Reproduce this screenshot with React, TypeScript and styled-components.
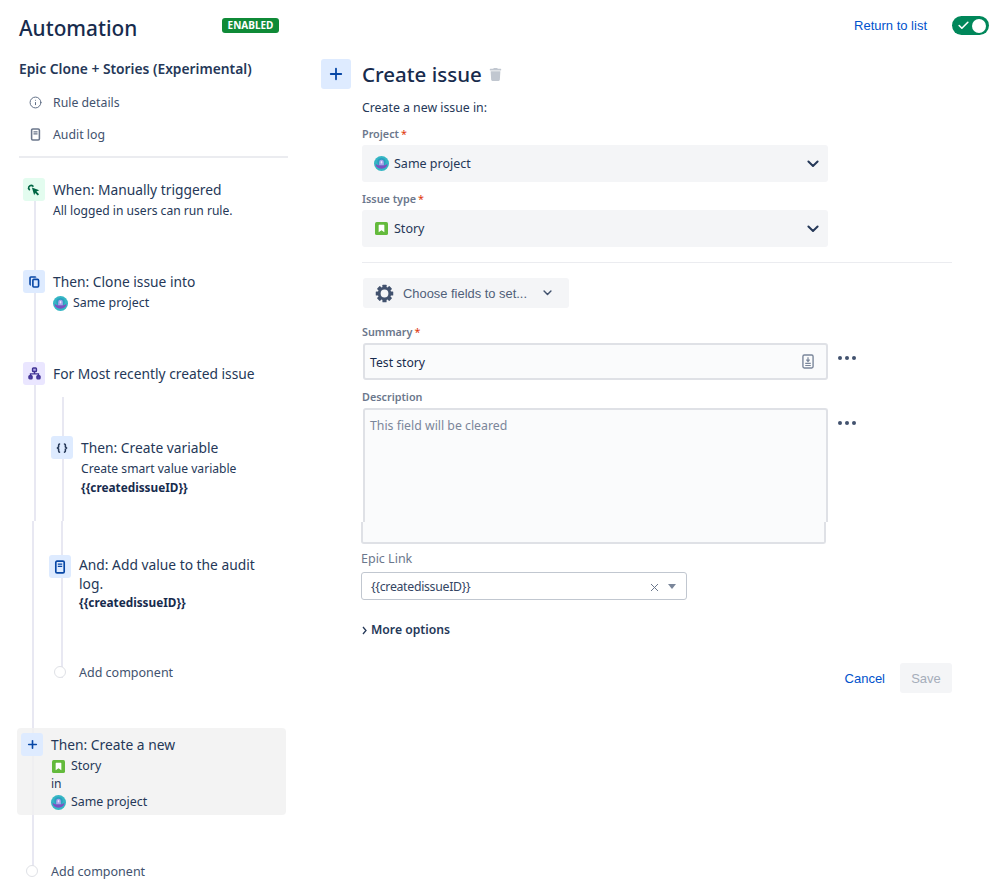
import React from "react"
import styled, { createGlobalStyle } from "styled-components"
import { Check, Info, Plus } from "lucide-react"
import { FaTrash } from "react-icons/fa"

// Components //

const Chevron = ({ size = 12, color = "#253858" }: { size?: number; color?: string }) => (
	<svg width={size} height={size * 0.65} viewBox="0 0 12 8" fill="none">
		<path d="M1.300 1.500L6 6.200l4.700-4.700" stroke={color} strokeWidth="2" strokeLinecap="round" strokeLinejoin="round" />
	</svg>
)

const ProjectAvatar = ({ size = 15 }: { size?: number }) => (
	<svg width={size} height={size} viewBox="0 0 16 16">
		<circle cx="8" cy="8" r="8" fill="#35b6c4" />
		<circle cx="8" cy="6.500" r="4.500" fill="#2b9fc0" />
		<path d="M1.800 8.200c1.400 1.200 2.800 1.700 3.600 1.700h5.200c.8 0 2.200-.5 3.600-1.700.3 2.800-2.600 5.300-6.200 5.300S1.500 11 1.800 8.200z" fill="#7e4fc0" />
		<path d="M5.500 9.900V6.500a2.500 2.500 0 0 1 5 0v3.400z" fill="#a9a2ea" />
		<rect x="7.200" y="5.400" width="1.600" height="2.600" rx=".8" fill="#e9e6fb" />
	</svg>
)

const StoryIcon = ({ size = 13 }: { size?: number }) => (
	<svg width={size} height={size} viewBox="0 0 16 16">
		<rect width="16" height="16" rx="2" fill="#63ba3c" />
		<path d="M5 3.500h6a.5.5 0 0 1 .5.5v8.500L8 10l-3.500 2.500V4a.5.5 0 0 1 .5-.5z" fill="#fff" />
	</svg>
)

const GearIcon = () => (
	<svg width="19" height="19" viewBox="0 0 20 20">
		{[0, 45, 90, 135, 180, 225, 270, 315].map((angle) => (
			<rect key={angle} x="7.800" y="0.800" width="4.400" height="4" rx=".6" fill="#42526e" transform={`rotate(${angle} 10 10)`} />
		))}
		<circle cx="10" cy="10" r="5.600" fill="none" stroke="#42526e" strokeWidth="3" />
	</svg>
)

const ClickIcon = () => (
	<svg width="14" height="14" viewBox="0 0 16 16" fill="none">
		<path d="M1.800 6.200a3 3 0 0 1 5-2.600" stroke="#006644" strokeWidth="1.800" strokeLinecap="round" />
		<path d="M1.800 6.300l1 1.300" stroke="#006644" strokeWidth="1.800" strokeLinecap="round" />
		<path d="M5.600 5.200l8.400 3-3.200 1.600 3 3-1.500 1.500-3-3L8.200 14z" fill="#006644" />
	</svg>
)

const CloneIcon = () => (
	<svg width="13" height="14" viewBox="0 0 16 16" fill="none" stroke="#0747a6" strokeWidth="2">
		<path d="M3.500 11.500h-.2a1 1 0 0 1-.8-1V2.800a1 1 0 0 1 1-1h5a1 1 0 0 1 1 .8" />
		<rect x="6" y="4.800" width="7" height="9.400" rx="1.200" />
	</svg>
)

const BranchIcon = () => (
	<svg width="13" height="13" viewBox="0 0 16 16" fill="#5243aa" stroke="#403294" strokeWidth="1.700">
		<rect x="5.600" y="1.200" width="4.800" height="4.400" rx="1" fill="#b3a9e8" />
		<rect x="1.200" y="10.800" width="3.800" height="3.800" rx="1" />
		<rect x="11" y="10.800" width="3.800" height="3.800" rx="1" />
		<path d="M8 5.500v3M3.100 10.800V8.500h9.800v2.300" fill="none" />
	</svg>
)

const DocIcon = ({ color = "#0747a6", size = 14 }: { color?: string; size?: number }) => (
	<svg width={size} height={size} viewBox="0 0 16 16" fill="none">
		<rect x="3.200" y="1.300" width="9.600" height="13.400" rx="1.400" stroke={color} strokeWidth="1.900" />
		<path d="M5.500 4.800h5M5.500 7.300h5" stroke={color} strokeWidth="1.500" />
	</svg>
)

const BracesIcon = () => (
	<svg width="12" height="12" viewBox="0 0 16 16" fill="none" stroke="#253858" strokeWidth="2">
		<path d="M5.500 2.500H5a1.500 1.500 0 0 0-1.500 1.500v2.500L2 8l1.500 1.500V12A1.500 1.500 0 0 0 5 13.500h.5" />
		<path d="M10.500 2.500h.5A1.500 1.500 0 0 1 12.500 4v2.500L14 8l-1.500 1.500V12a1.500 1.500 0 0 1-1.500 1.500h-.5" />
	</svg>
)

const SmartValueIcon = () => (
	<svg width="12" height="15" viewBox="0 0 13 16" fill="none">
		<rect x="1" y="1" width="11" height="14" rx="1.500" stroke="#7a869a" strokeWidth="1.500" />
		<path d="M6.500 3.500v4M4.800 6l1.700 2 1.700-2" stroke="#7a869a" strokeWidth="1.300" />
		<path d="M3.500 10h6M3.500 12.300h6" stroke="#7a869a" strokeWidth="1.200" />
	</svg>
)

const Dots = () => (
	<MoreDots>
		<i />
		<i />
		<i />
	</MoreDots>
)

export default function App() {
	return (
		<>
			<GlobalStyle />
			<Page>
				<Sidebar>
					<SidebarHeader>
						<AppTitle>Automation</AppTitle>
						<Lozenge>ENABLED</Lozenge>
					</SidebarHeader>
					<RuleName>Epic Clone + Stories (Experimental)</RuleName>
					<NavItem>
						<NavIcon>
							<Info size={13} color="#5e6c84" strokeWidth={1.8} />
						</NavIcon>
						Rule details
					</NavItem>
					<NavItem>
						<NavIcon>
							<DocIcon color="#6b778c" size={13} />
						</NavIcon>
						Audit log
					</NavItem>
					<Divider />

					<Timeline $height={343} $lineLeft={15}>
						<Step $height={92} $left={4}>
							<StepIcon $bg="#e3fcef">
								<ClickIcon />
							</StepIcon>
							<StepBody>
								<StepTitle>When: Manually triggered</StepTitle>
								<StepText>All logged in users can run rule.</StepText>
							</StepBody>
						</Step>
						<Step $height={92} $left={4}>
							<StepIcon $bg="#deebff">
								<CloneIcon />
							</StepIcon>
							<StepBody>
								<StepTitle>Then: Clone issue into</StepTitle>
								<IconLine>
									<IconSlot>
										<ProjectAvatar />
									</IconSlot>
									Same project
								</IconLine>
							</StepBody>
						</Step>
						<Step $height={74} $left={4}>
							<StepIcon $bg="#eae6ff">
								<BranchIcon />
							</StepIcon>
							<StepBody>
								<StepTitle>For Most recently created issue</StepTitle>
							</StepBody>
						</Step>
						<Branch $lineLeft={11} $lineTop={-39} $left={32}>
							<Step $height={85} $left={0}>
								<StepIcon $bg="#deebff">
									<BracesIcon />
								</StepIcon>
								<StepBody>
									<StepTitle>Then: Create variable</StepTitle>
									<StepText>Create smart value variable</StepText>
									<StepStrong>{"{{createdissueID}}"}</StepStrong>
								</StepBody>
							</Step>
						</Branch>
					</Timeline>

					<Timeline $height={350} $lineLeft={13}>
						<Branch $lineLeft={12} $lineTop={0} $left={30} $pad={34}>
							<Step $height={111} $left={0}>
								<StepIcon $bg="#deebff">
									<DocIcon />
								</StepIcon>
								<StepBody $width={190}>
									<StepTitle $tight>And: Add value to the audit log.</StepTitle>
									<StepStrong>{"{{createdissueID}}"}</StepStrong>
								</StepBody>
							</Step>
							<AddRow $height={12}>
								<AddDot />
								<AddLabel>Add component</AddLabel>
							</AddRow>
						</Branch>
						<SelectedStep>
							<StepIcon $bg="#deebff">
								<Plus size={13} color="#0747a6" strokeWidth={3} />
							</StepIcon>
							<StepBody>
								<StepTitle>Then: Create a new</StepTitle>
								<IconLine>
									<IconSlot>
										<StoryIcon />
									</IconSlot>
									Story
								</IconLine>
								<StepText>in</StepText>
								<IconLine>
									<IconSlot>
										<ProjectAvatar />
									</IconSlot>
									Same project
								</IconLine>
							</StepBody>
						</SelectedStep>
						<BottomAdd>
							<AddDot />
							<AddLabel>Add component</AddLabel>
						</BottomAdd>
					</Timeline>
				</Sidebar>

				<Main>
					<TopBar>
						<TextLink>Return to list</TextLink>
						<Toggle>
							<Check size={13} color="#fff" strokeWidth={3} />
							<Knob />
						</Toggle>
					</TopBar>
					<PanelHeader>
						<PanelIcon>
							<Plus size={18} color="#0747a6" strokeWidth={2.4} />
						</PanelIcon>
						<PanelTitle>Create issue</PanelTitle>
						<FaTrash size={13} color="#c1c7d0" />
					</PanelHeader>
					<Form>
						<Intro>Create a new issue in:</Intro>
						<FieldLabel $top={10}>
							Project<Req>*</Req>
						</FieldLabel>
						<SelectBox>
							<IconSlot>
								<ProjectAvatar size={15} />
							</IconSlot>
							<SelectValue>Same project</SelectValue>
							<Chevron />
						</SelectBox>
						<FieldLabel $top={10}>
							Issue type<Req>*</Req>
						</FieldLabel>
						<SelectBox>
							<IconSlot>
								<StoryIcon size={13} />
							</IconSlot>
							<SelectValue>Story</SelectValue>
							<Chevron />
						</SelectBox>
						<Rule />
						<FieldsButton>
							<GearIcon />
							<FieldsLabel>Choose fields to set...</FieldsLabel>
							<Chevron size={9} color="#42526e" />
						</FieldsButton>
						<FieldLabel $top={17}>
							Summary<Req>*</Req>
						</FieldLabel>
						<FieldRow>
							<InputBox>
								<InputText>Test story</InputText>
								<SmartValueIcon />
							</InputBox>
							<Dots />
						</FieldRow>
						<FieldLabel $top={10}>Description</FieldLabel>
						<FieldRow>
							<TextAreaBox>This field will be cleared</TextAreaBox>
							<Dots />
						</FieldRow>
						<TextAreaFoot />
						<EpicLabel>Epic Link</EpicLabel>
						<EpicSelect>
							<EpicValue>{"{{createdissueID}}"}</EpicValue>
							<ClearMark>
								<svg width="9" height="9" viewBox="0 0 9 9" stroke="#6b778c" strokeWidth="1">
									<path d="M1 1l7 7M8 1L1 8" />
								</svg>
							</ClearMark>
							<Caret />
						</EpicSelect>
						<MoreOptions>
							<svg width="6" height="9" viewBox="0 0 6 9" fill="none" stroke="#253858" strokeWidth="1.300">
								<path d="M1 1l3 3.500L1 8" />
							</svg>
							More options
						</MoreOptions>
					</Form>
					<Actions>
						<TextLink>Cancel</TextLink>
						<SaveButton>Save</SaveButton>
					</Actions>
				</Main>
			</Page>
		</>
	)
}

// Styled Components //

const GlobalStyle = createGlobalStyle`
	html, body {
		margin: 0;
		padding: 0;
		background: #fff;
	}
	body {
		font-family: "Noto Sans", "Open Sans", sans-serif;
		color: #172b4d;
	}
	* {
		box-sizing: border-box;
	}
`

const Page = styled.div`
	display: flex;
	width: 999px;
	height: 887px;
	overflow: hidden;
`

const Sidebar = styled.aside`
	width: 269px;
	margin-left: 19px;
	flex-shrink: 0;
`

const SidebarHeader = styled.div`
	display: flex;
	justify-content: space-between;
	align-items: flex-start;
	height: 54px;
	padding: 12px 9px 0 0;
`

const AppTitle = styled.h1`
	margin: 0;
	font-size: 20.8px;
	line-height: 32px;
	font-weight: 500;
	color: #172b4d;
`

const Lozenge = styled.span`
	margin-top: 6px;
	height: 15px;
	width: 57px;
	border-radius: 3px;
	background: #0f8a37;
	color: #fff;
	font-size: 10px;
	line-height: 15px;
	font-weight: 700;
	text-align: center;
`

const RuleName = styled.h2`
	margin: 0 0 2px;
	height: 30px;
	font-size: 13.8px;
	line-height: 30px;
	font-weight: 600;
	color: #253858;
	white-space: nowrap;
`

const NavItem = styled.div`
	display: flex;
	align-items: center;
	height: 32px;
	font-size: 12.3px;
	color: #42526e;
`

const NavIcon = styled.span`
	display: flex;
	justify-content: center;
	width: 16px;
	margin: 0 10px 0 8px;
`

const Divider = styled.hr`
	margin: 6px 0 20px;
	height: 2px;
	border: 0;
	background: #ebecf0;
`

const Timeline = styled.div<{ $height: number; $lineLeft: number }>`
	position: relative;
	height: ${({ $height }) => $height}px;

	&::before {
		content: "";
		position: absolute;
		left: ${({ $lineLeft }) => $lineLeft}px;
		top: 0;
		bottom: 0;
		width: 2px;
		background: #e8e8f2;
	}
`

const Step = styled.div<{ $height: number; $left: number }>`
	position: relative;
	display: flex;
	gap: 8px;
	height: ${({ $height }) => $height}px;
	margin-left: ${({ $left }) => $left}px;
`

const StepIcon = styled.span<{ $bg: string }>`
	display: flex;
	align-items: center;
	justify-content: center;
	flex-shrink: 0;
	width: 22px;
	height: 23px;
	border-radius: 3px;
	background: ${({ $bg }) => $bg};
`

const StepBody = styled.div<{ $width?: number }>`
	width: ${({ $width }) => ($width ? `${$width}px` : "auto")};
	min-width: 0;
`

const StepTitle = styled.div<{ $tight?: boolean }>`
	font-size: 13.8px;
	line-height: 19px;
	margin-top: ${({ $tight }) => ($tight ? "0" : "2px")};
	margin-bottom: ${({ $tight }) => ($tight ? "0" : "3px")};
	color: #253858;
`

const StepText = styled.div`
	font-size: 12.1px;
	line-height: 18px;
	color: #253858;
`

const StepStrong = styled.div`
	font-size: 11.8px;
	line-height: 18px;
	font-weight: 700;
	color: #172b4d;
`

const IconLine = styled.div`
	display: flex;
	align-items: center;
	gap: 5px;
	font-size: 12.4px;
	line-height: 18px;
	color: #253858;
`

const IconSlot = styled.span`
	display: flex;
	justify-content: center;
	width: 15px;
`

const Branch = styled.div<{ $lineLeft: number; $lineTop: number; $left: number; $pad?: number }>`
	position: relative;
	margin-left: ${({ $left }) => $left}px;
	padding-top: ${({ $pad = 0 }) => $pad}px;

	&::before {
		content: "";
		position: absolute;
		left: ${({ $lineLeft }) => $lineLeft}px;
		top: ${({ $lineTop }) => $lineTop}px;
		bottom: 0;
		width: 2px;
		background: #e8e8f2;
	}
`

const AddRow = styled.div<{ $height: number }>`
	position: relative;
	display: flex;
	align-items: center;
	height: ${({ $height }) => $height}px;
	margin-left: 5px;
	gap: 13px;
`

const AddDot = styled.span`
	flex-shrink: 0;
	width: 12px;
	height: 12px;
	border: 1px solid #dfe1e6;
	border-radius: 50%;
	background: #fff;
`

const AddLabel = styled.span`
	font-size: 12.5px;
	color: #42526e;
`

const SelectedStep = styled.div`
	position: relative;
	display: flex;
	gap: 8px;
	width: 269px;
	height: 87px;
	margin: 50px 0 0 -2px;
	padding: 5px 4px;
	border-radius: 4px;
	background: rgba(240, 240, 240, 0.8);
`

const BottomAdd = styled.div`
	position: relative;
	display: flex;
	align-items: center;
	gap: 13px;
	margin: 50px 0 0 7px;
	height: 12px;
`

const Main = styled.main`
	flex: 1;
	margin-left: 33px;
	padding-right: 10px;
`

const TopBar = styled.div`
	display: flex;
	justify-content: flex-end;
	align-items: center;
	gap: 25px;
	height: 59px;
	padding-bottom: 8px;
`

const TextLink = styled.a`
	font-family: "Liberation Sans", Arial, sans-serif;
	font-size: 13px;
	color: #0052cc;
`

const Toggle = styled.div`
	position: relative;
	display: flex;
	align-items: center;
	width: 37px;
	height: 19px;
	padding-left: 5px;
	border-radius: 10px;
	background: #00875a;
`

const Knob = styled.span`
	position: absolute;
	right: 3px;
	top: 2.500px;
	width: 14px;
	height: 14px;
	border-radius: 50%;
	background: #fff;
`

const PanelHeader = styled.div`
	display: flex;
	align-items: center;
	height: 30px;
`

const PanelIcon = styled.span`
	display: flex;
	align-items: center;
	justify-content: center;
	width: 30px;
	height: 30px;
	margin-right: 11px;
	border-radius: 3px;
	background: #deebff;
`

const PanelTitle = styled.h2`
	margin: 0 7px 0 0;
	font-size: 20.5px;
	line-height: 30px;
	font-weight: 500;
	color: #172b4d;
`

const Form = styled.div`
	margin-left: 41px;
`

const Intro = styled.p`
	margin: 10px 0 0;
	font-size: 12.3px;
	line-height: 18px;
	color: #253858;
`

const FieldLabel = styled.label<{ $top: number }>`
	display: block;
	margin-top: ${({ $top }) => $top}px;
	height: 14px;
	margin-bottom: 4px;
	font-size: 10.8px;
	line-height: 14px;
	font-weight: 600;
	color: #6b778c;
`

const Req = styled.span`
	margin-left: 2px;
	color: #de350b;
	font-weight: 400;
`

const SelectBox = styled.div`
	display: flex;
	align-items: center;
	gap: 5px;
	width: 466px;
	height: 37px;
	padding: 0 9px 0 12px;
	border-radius: 3px;
	background: #f4f5f7;
`

const SelectValue = styled.span`
	flex: 1;
	font-size: 12.5px;
	color: #253858;
`

const Rule = styled.hr`
	width: 590px;
	height: 1px;
	margin: 15px 0 15px;
	border: 0;
	background: #ebecf0;
`

const FieldsButton = styled.div`
	display: flex;
	align-items: center;
	width: 206px;
	height: 30px;
	margin-left: 1px;
	padding: 0 17px 0 12px;
	border-radius: 3px;
	background: #f4f5f7;
`

const FieldsLabel = styled.span`
	flex: 1;
	margin-left: 9px;
	font-family: "Liberation Sans", Arial, sans-serif;
	font-size: 12.9px;
	color: #505f79;
`

const FieldRow = styled.div`
	display: flex;
	align-items: flex-start;
	gap: 10px;
	margin-left: 1px;
`

const InputBox = styled.div`
	display: flex;
	align-items: center;
	justify-content: space-between;
	width: 465px;
	height: 37px;
	padding: 0 12px 0 5px;
	border: 2px solid #dfe1e6;
	border-radius: 3px;
	background: #fafbfc;
	font-size: 12.2px;
	color: #172b4d;
`

const InputText = styled.span`
	padding-top: 2px;
`

const MoreDots = styled.div`
	display: flex;
	gap: 3px;
	margin-top: 13px;

	i {
		width: 4px;
		height: 4px;
		border-radius: 50%;
		background: #42526e;
	}
`

const TextAreaBox = styled.div`
	width: 465px;
	height: 114px;
	padding: 7px 5px;
	border: 2px solid #dfe1e6;
	border-bottom: 0;
	border-radius: 3px 3px 0 0;
	background: #fafbfc;
	font-size: 12.3px;
	line-height: 18px;
	color: #7a869a;
`

const TextAreaFoot = styled.div`
	width: 465px;
	height: 22px;
	margin-left: -1px;
	border: 2px solid #dfe1e6;
	border-top: 0;
	border-radius: 0 0 3px 3px;
	background: #fafbfc;
`

const EpicLabel = styled.div`
	margin: 6px 0 4px -1px;
	font-size: 12.5px;
	line-height: 18px;
	color: #6b778c;
`

const EpicSelect = styled.div`
	display: flex;
	align-items: center;
	width: 326px;
	height: 28px;
	margin-left: -1px;
	padding: 0 9px 0 9px;
	border: 1px solid #c1c7d0;
	border-radius: 3px;
	background: #fff;
`

const EpicValue = styled.span`
	flex: 1;
	font-size: 12.3px;
	letter-spacing: -0.3px;
	color: #344563;
`

const ClearMark = styled.span`
	display: flex;
	margin: 3px 9px 0 0;
`

const Caret = styled.span`
	width: 0;
	height: 0;
	border-left: 4.500px solid transparent;
	border-right: 4.500px solid transparent;
	border-top: 5px solid #7a869a;
	margin-right: 1px;
`

const MoreOptions = styled.div`
	display: flex;
	align-items: center;
	gap: 3px;
	margin: 21px 0 0 0;
	font-size: 12.2px;
	line-height: 18px;
	font-weight: 600;
	color: #253858;
`

const Actions = styled.div`
	display: flex;
	justify-content: flex-end;
	align-items: center;
	gap: 15px;
	margin: 24px 37px 0 0;
`

const SaveButton = styled.button`
	width: 52px;
	height: 30px;
	padding: 0;
	border: 0;
	border-radius: 3px;
	background: #f4f5f7;
	font-family: "Liberation Sans", Arial, sans-serif;
	font-size: 13px;
	color: #a5adba;
`
